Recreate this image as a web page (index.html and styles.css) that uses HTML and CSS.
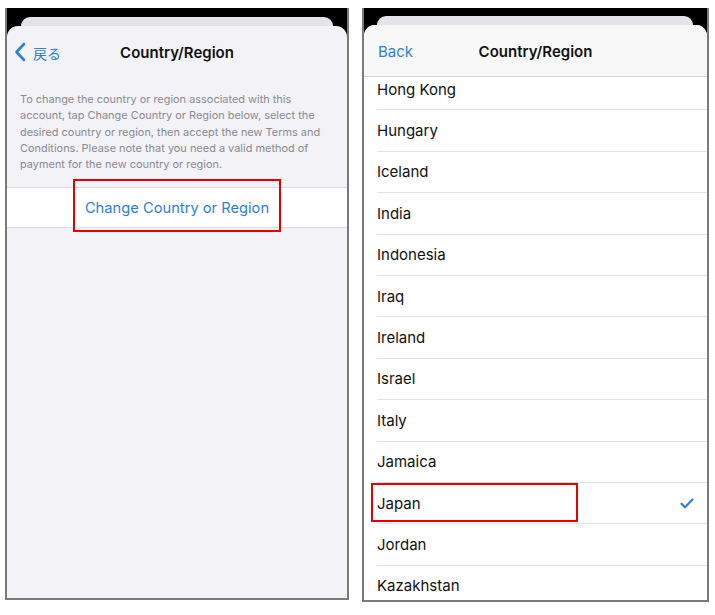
FILE: index.html
```html
<!DOCTYPE html>
<html lang="en">
<head>
    <meta charset="UTF-8" />
    <title>Country/Region</title>
    <link rel="stylesheet" href="styles.css">
</head>
<body>
    <div class="shots">
        <div class="phone phone-left">
            <div class="tab"></div>
            <div class="sheet sheet-gray">
                <div class="nav">
                    <div class="back">
                        <svg class="chev" width="12" height="20" viewBox="0 0 12 20"><path d="M10 2 L2.5 10 L10 18" fill="none" stroke="#2f7fd6" stroke-width="2.6" stroke-linecap="round" stroke-linejoin="round"/></svg>
                        <span class="back-jp">戻る</span>
                    </div>
                    <div class="title">Country/Region</div>
                </div>
                <p class="note">To change the country or region associated with this account, tap Change Country or Region below, select the desired country or region, then accept the new Terms and Conditions. Please note that you need a valid method of payment for the new country or region.</p>
                <div class="action">
                    <span class="action-text">Change Country or Region</span>
                    <div class="mark mark-action"></div>
                </div>
            </div>
        </div>
        <div class="phone phone-right">
            <div class="tab"></div>
            <div class="sheet sheet-white">
                <div class="nav nav-bar">
                    <div class="back back-en">Back</div>
                    <div class="title">Country/Region</div>
                </div>
                <ul class="list">
                    <li>Hong Kong</li>
                    <li>Hungary</li>
                    <li>Iceland</li>
                    <li>India</li>
                    <li>Indonesia</li>
                    <li>Iraq</li>
                    <li>Ireland</li>
                    <li>Israel</li>
                    <li>Italy</li>
                    <li>Jamaica</li>
                    <li class="picked">
                        <span>Japan</span>
                        <svg class="check" width="14" height="11" viewBox="0 0 14 11"><path d="M1.5 5.8 L5 9.2 L12.5 1.5" fill="none" stroke="#2f7fd6" stroke-width="2.2" stroke-linecap="round" stroke-linejoin="round"/></svg>
                        <div class="mark mark-row"></div>
                    </li>
                    <li>Jordan</li>
                    <li>Kazakhstan</li>
                </ul>
            </div>
        </div>
    </div>
</body>
</html>
```

FILE: styles.css
```css
*{
    margin:0;
    padding:0;
    box-sizing:border-box;
    list-style:none;
}
body{
    background:#fff;
    font-family:"Inter","Noto Sans CJK JP",sans-serif;
}
.shots{
    display:flex;
    align-items:flex-start;
    gap:13px;
    padding:8px 0 0 5px;
}
.phone{
    background:#000;
    border:2px solid #7a7a7a;
    border-top:none;
    padding-top:9px;
    display:flex;
    flex-direction:column;
    overflow:hidden;
}
.phone-left{
    width:344px;
    height:592px;
}
.phone-right{
    width:347px;
    height:594px;
    padding-top:8px;
}
.tab{
    height:9px;
    margin:0 14px;
    background:#e4e4e8;
    border-radius:10px 10px 0 0;
}
.phone-right .tab{
    margin:0 14px 0 13px;
}
.sheet{
    flex:1;
    border-radius:11px 11px 0 0;
    overflow:hidden;
}
.sheet-gray{
    background:#f2f2f7;
}
.sheet-white{
    background:#fff;
}
.nav{
    position:relative;
    z-index:2;
    height:52px;
    display:flex;
    align-items:center;
    justify-content:center;
}
.nav-bar{
    background:#f8f8f8;
    border-bottom:1px solid #d6d6d8;
}
.title{
    font-size:15px;
    font-weight:600;
    color:#111;
    padding-top:1px;
}
.back{
    position:absolute;
    left:7px;
    top:0;
    height:100%;
    display:flex;
    align-items:center;
    gap:7px;
    color:#2f7fd6;
}
.back-jp{
    font-size:14px;
    padding-top:1px;
}
.back-en{
    left:14px;
    font-size:15px;
    padding-top:1px;
}
.note{
    padding:13px 8px 0 13px;
    font-size:10.95px;
    line-height:16.3px;
    color:#8b8b90;
}
.action{
    position:relative;
    margin-top:15px;
    height:41px;
    background:#fff;
    border-top:1px solid #dcdce0;
    border-bottom:1px solid #dcdce0;
    display:flex;
    align-items:center;
    justify-content:center;
}
.action-text{
    font-size:14.7px;
    color:#2f7fd6;
}
.mark{
    position:absolute;
    border:2px solid #e60000;
}
.mark-action{
    left:66px;
    top:-9px;
    width:208px;
    height:53px;
}
.list{
    margin-top:-8px;
}
.list li{
    position:relative;
    height:41.4px;
    margin-left:13px;
    padding-right:13px;
    border-bottom:1px solid #e2e2e4;
    display:flex;
    align-items:center;
    justify-content:space-between;
    font-size:15px;
    color:#111;
}
.mark-row{
    left:-6px;
    top:0;
    width:207px;
    height:39px;
}
```
